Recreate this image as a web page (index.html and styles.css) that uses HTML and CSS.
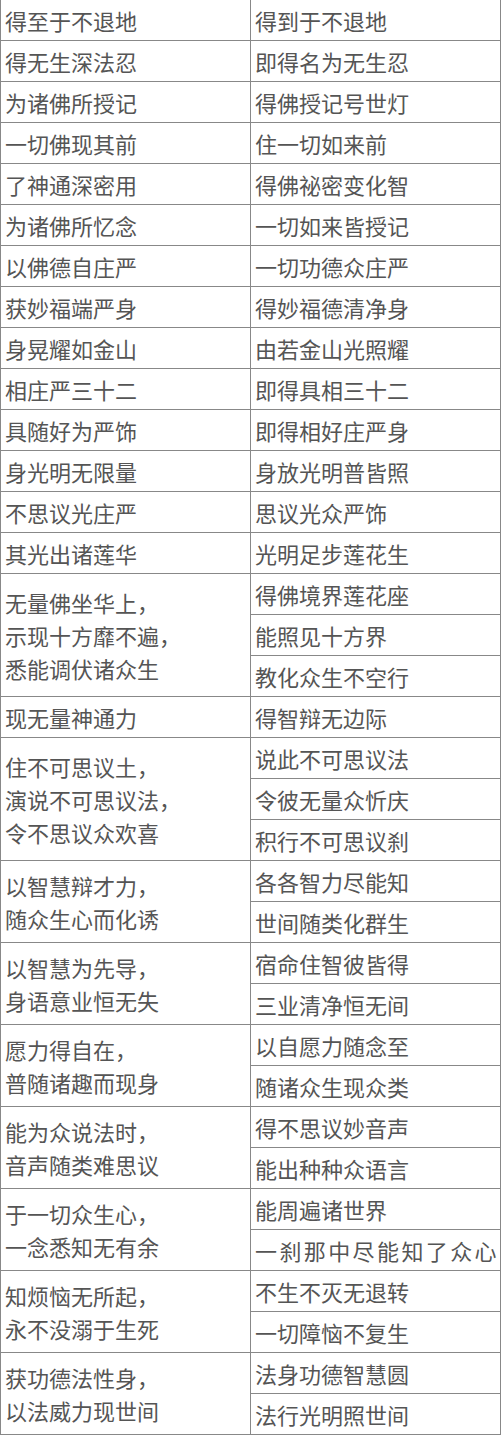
FILE: index.html
```html
<!DOCTYPE html>
<html lang="zh-CN">
<head>
<meta charset="utf-8">
<title>偈颂对照</title>
<link rel="stylesheet" href="styles.css">
</head>
<body>
<table class="verses">
<tbody>
<tr><td>得至于不退地</td><td>得到于不退地</td></tr>
<tr><td>得无生深法忍</td><td>即得名为无生忍</td></tr>
<tr><td>为诸佛所授记</td><td>得佛授记号世灯</td></tr>
<tr><td>一切佛现其前</td><td>住一切如来前</td></tr>
<tr><td>了神通深密用</td><td>得佛祕密变化智</td></tr>
<tr><td>为诸佛所忆念</td><td>一切如来皆授记</td></tr>
<tr><td>以佛德自庄严</td><td>一切功德众庄严</td></tr>
<tr><td>获妙福端严身</td><td>得妙福德清净身</td></tr>
<tr><td>身晃耀如金山</td><td>由若金山光照耀</td></tr>
<tr><td>相庄严三十二</td><td>即得具相三十二</td></tr>
<tr><td>具随好为严饰</td><td>即得相好庄严身</td></tr>
<tr><td>身光明无限量</td><td>身放光明普皆照</td></tr>
<tr><td>不思议光庄严</td><td>思议光众严饰</td></tr>
<tr><td>其光出诸莲华</td><td>光明足步莲花生</td></tr>
<tr><td rowspan="3">无量佛坐华上，<br>示现十方靡不遍，<br>悉能调伏诸众生</td><td>得佛境界莲花座</td></tr>
<tr><td>能照见十方界</td></tr>
<tr><td>教化众生不空行</td></tr>
<tr><td>现无量神通力</td><td>得智辩无边际</td></tr>
<tr><td rowspan="3">住不可思议土，<br>演说不可思议法，<br>令不思议众欢喜</td><td>说此不可思议法</td></tr>
<tr><td>令彼无量众忻庆</td></tr>
<tr><td>积行不可思议刹</td></tr>
<tr><td rowspan="2">以智慧辩才力，<br>随众生心而化诱</td><td>各各智力尽能知</td></tr>
<tr><td>世间随类化群生</td></tr>
<tr><td rowspan="2">以智慧为先导，<br>身语意业恒无失</td><td>宿命住智彼皆得</td></tr>
<tr><td>三业清净恒无间</td></tr>
<tr><td rowspan="2">愿力得自在，<br>普随诸趣而现身</td><td>以自愿力随念至</td></tr>
<tr><td>随诸众生现众类</td></tr>
<tr><td rowspan="2">能为众说法时，<br>音声随类难思议</td><td>得不思议妙音声</td></tr>
<tr><td>能出种种众语言</td></tr>
<tr><td rowspan="2">于一切众生心，<br>一念悉知无有余</td><td>能周遍诸世界</td></tr>
<tr><td class="long">一刹那中尽能知了众心</td></tr>
<tr><td rowspan="2">知烦恼无所起，<br>永不没溺于生死</td><td>不生不灭无退转</td></tr>
<tr><td>一切障恼不复生</td></tr>
<tr><td rowspan="2">获功德法性身，<br>以法威力现世间</td><td>法身功德智慧圆</td></tr>
<tr><td>法行光明照世间</td></tr>
</tbody>
</table>
</body>
</html>
```

FILE: styles.css
```css
html, body {
  margin: 0;
  padding: 0;
  background: #ffffff;
}

.verses {
  width: 501px;
  margin-top: -1px;
  border-collapse: collapse;
  table-layout: fixed;
  font-family: "Noto Sans CJK SC", "Noto Sans", sans-serif;
  font-size: 22px;
  line-height: 33px;
  color: #555555;
}

.verses td {
  width: 50%;
  height: 40px;
  padding: 0 4px;
  border: 1px solid #888888;
  vertical-align: middle;
  text-align: left;
  white-space: nowrap;
  overflow: hidden;
}

.verses td.long {
  letter-spacing: 2.4px;
}
```
